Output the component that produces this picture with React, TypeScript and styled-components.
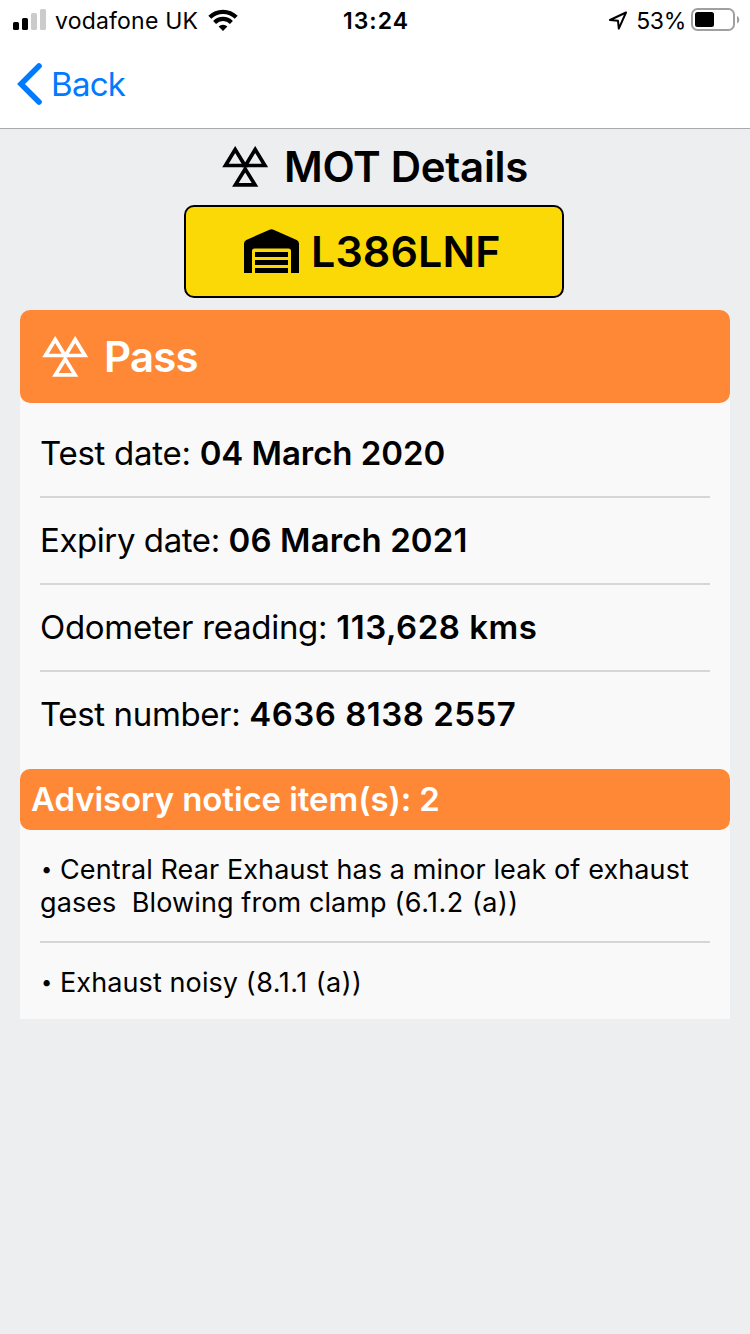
import React from "react";
import styled, { createGlobalStyle } from "styled-components";

const GlobalStyle = createGlobalStyle`
  * { box-sizing: border-box; }
  body {
    margin: 0;
    background: #edeef0;
    font-family: Inter, "Liberation Sans", sans-serif;
    color: #000;
    font-feature-settings: "calt" 0;
  }
`;

const Screen = styled.div`
  width: 750px;
  min-height: 1334px;
  display: flex;
  flex-direction: column;
`;

const StatusBar = styled.header`
  height: 40px;
  background: #fff;
  display: grid;
  grid-template-columns: 1fr auto 1fr;
  align-items: center;
  padding: 0 10px 0 13px;
`;

const StatusGroup = styled.div<{ $end?: boolean }>`
  display: flex;
  align-items: center;
  justify-content: ${(p) => (p.$end ? "flex-end" : "flex-start")};
`;

const StatusText = styled.span<{ $spacing: number; $bold?: boolean; $gap?: string }>`
  font-size: 23px;
  line-height: 38px;
  padding-top: 2px;
  font-weight: ${(p) => (p.$bold ? 600 : 400)};
  letter-spacing: ${(p) => p.$spacing}px;
  margin: ${(p) => p.$gap ?? "0"};
  white-space: nowrap;
`;

const NavBar = styled.nav`
  height: 89px;
  background: #fff;
  border-bottom: 1px solid #a9aaad;
  padding: 0 17px;
  display: flex;
  align-items: center;
`;

const BackButton = styled.button`
  border: 0;
  padding: 0;
  background: none;
  color: #007aff;
  font: inherit;
  font-size: 33px;
  line-height: 88px;
  letter-spacing: -0.7px;
  display: flex;
  align-items: center;
  gap: 9px;
`;

const HeadingText = styled.span<{ $size: number; $spacing: number; $lift?: number }>`
  font-size: ${(p) => p.$size}px;
  font-weight: 600;
  letter-spacing: ${(p) => p.$spacing}px;
  padding-bottom: ${(p) => p.$lift ?? 0}px;
`;

const Title = styled.h1`
  margin: 0;
  height: 76px;
  display: flex;
  align-items: center;
  justify-content: center;
  gap: 16px;
`;

const Plate = styled.div`
  width: 380px;
  height: 93px;
  margin-left: 184px;
  border: 2px solid #000;
  border-radius: 10px;
  background: #fbd906;
  display: flex;
  align-items: center;
  padding: 0 0 1px 58px;
  gap: 12px;
`;

const Card = styled.section`
  margin: 12px 20px 0;
  background: linear-gradient(#edeef0 50px, #f9f9f9 50px);
`;

const ResultHeader = styled.div`
  height: 93px;
  border-radius: 10px;
  background: #ff8836;
  color: #fff;
  display: flex;
  align-items: center;
  gap: 16px;
  padding-left: 22px;
`;

const SectionHeader = styled.h2`
  margin: 0;
  height: 61px;
  line-height: 60px;
  border-radius: 10px;
  background: #ff8836;
  color: #fff;
  padding-left: 11px;
  font-size: 33px;
  font-weight: 600;
  letter-spacing: -0.08px;
`;

const RowList = styled.div`
  padding: 8px 20px 10px;
`;

const Row = styled.div`
  height: 87px;
  line-height: 84px;
  font-size: 33px;
  border-bottom: 2px solid #d6d6d7;
  white-space: nowrap;
  &:last-child {
    border-bottom: 0;
  }
`;

const Label = styled.span<{ $spacing: number }>`
  letter-spacing: ${(p) => p.$spacing}px;
`;

const Value = styled.strong<{ $spacing: number }>`
  font-weight: 600;
  letter-spacing: ${(p) => p.$spacing}px;
`;

const AdvisoryList = styled.div`
  padding: 0 20px;
`;

const Advisory = styled.div`
  padding: 23px 0 22px;
  font-size: 27px;
  line-height: 33px;
  letter-spacing: 0.1px;
  border-bottom: 2px solid #d6d6d7;
  &:last-child {
    border-bottom: 0;
    padding-bottom: 20px;
  }
`;

const Line = styled.div`
  display: flex;
  height: 33px;
  white-space: pre;
`;

const Bullet = styled.span`
  width: 20px;
  padding-left: 1px;
  font-size: 20px;
`;

const Code = styled.span`
  letter-spacing: 0.5px;
`;

const SignalIcon = () => (
  <svg width="33" height="22" viewBox="0 0 33 22">
    <rect x="0" y="13" width="6" height="8" rx="1.6" />
    <rect x="9" y="9" width="6" height="12" rx="1.6" />
    <rect x="18" y="4" width="6" height="17" rx="1.6" fill="#cbcbcb" />
    <rect x="27" y="0" width="6" height="21" rx="1.6" fill="#cbcbcb" />
  </svg>
);

const WifiIcon = () => (
  <svg width="30" height="22" viewBox="0 0 30 22">
    <g fill="none" stroke="#000" strokeWidth="4.2">
      <path d="M1.800 8.200a18.800 18.800 0 0 1 26.400 0" />
      <path d="M6.600 13.400a12 12 0 0 1 16.800 0" />
    </g>
    <path d="M15 22l-4.400-4.400a6.200 6.200 0 0 1 8.800 0z" />
  </svg>
);

const LocationIcon = () => (
  <svg width="20" height="22" viewBox="0 0 20 22">
    <path
      d="M18 3.500L2 11l8 .8.800 7.800z"
      fill="none"
      stroke="#000"
      strokeWidth="2"
      strokeLinejoin="round"
    />
  </svg>
);

const BatteryIcon = () => (
  <svg width="49" height="24" viewBox="0 0 49 24">
    <rect x="1" y="1" width="42" height="21" rx="5.5" fill="none" stroke="#a0a0a0" strokeWidth="2" />
    <rect x="4" y="4" width="19" height="15" rx="2.5" />
    <path d="M46 8v7.400c1.400-.6 2.300-2 2.300-3.700s-.9-3.100-2.300-3.700z" fill="#a0a0a0" />
  </svg>
);

const ChevronIcon = () => (
  <svg width="25" height="42" viewBox="0 0 25 42">
    <path
      d="M22 3L4 21l18 18"
      fill="none"
      stroke="#007aff"
      strokeWidth="5.6"
      strokeLinecap="round"
      strokeLinejoin="miter"
    />
  </svg>
);

const TrianglesIcon = () => (
  <svg width="46" height="42" viewBox="0 0 46 42">
    <g fill="none" stroke="currentColor" strokeWidth="3.7">
      <path d="M13.200 3.500L3.500 19.500h19.400z" />
      <path d="M33.200 3.500L23.500 19.500h19.400z" />
      <path d="M23.200 23L13.400 38.900h19.600z" />
    </g>
  </svg>
);

const GarageIcon = () => (
  <svg width="55" height="44" viewBox="0 0 55 44">
    <path d="M0 44V14.500Q0 12 2.300 11L25.500.7q2-.9 4 0L52.700 11Q55 12 55 14.500V44h-8V22q0-2.500-2.500-2.500h-34Q8 19.500 8 22v22z" />
    <path d="M11 23h33v5H11zM11 31h33v5H11zM11 39h33v5H11z" />
  </svg>
);

const details = [
  { label: "Test date:", value: "04 March 2020", ls: -0.28, vs: -0.05 },
  { label: "Expiry date:", value: "06 March 2021", ls: -0.42, vs: 0.1 },
  { label: "Odometer reading:", value: "113,628 kms", ls: -0.29, vs: 0.5 },
  { label: "Test number:", value: "4636 8138 2557", ls: -0.37, vs: 0.5 },
];

const advisories = [
  {
    lines: ["Central Rear Exhaust has a minor leak of exhaust", "gases  Blowing from clamp "],
    code: "(6.1.2 (a))",
  },
  { lines: ["Exhaust noisy "], code: "(8.1.1 (a))" },
];

export default function App() {
  return (
    <Screen>
      <GlobalStyle />
      <StatusBar>
        <StatusGroup>
          <SignalIcon />
          <StatusText $spacing={0.2} $gap="0 10px 0 9px">vodafone UK</StatusText>
          <WifiIcon />
        </StatusGroup>
        <StatusText $spacing={1} $bold $gap="0 1px 0 0">13:24</StatusText>
        <StatusGroup $end>
          <LocationIcon />
          <StatusText $spacing={-0.3} $gap="0 5px 0 8px">53%</StatusText>
          <BatteryIcon />
        </StatusGroup>
      </StatusBar>
      <NavBar>
        <BackButton>
          <ChevronIcon />
          Back
        </BackButton>
      </NavBar>
      <main>
        <Title>
          <TrianglesIcon />
          <HeadingText $size={42} $spacing={-0.3} $lift={2}>MOT Details</HeadingText>
        </Title>
        <Plate>
          <GarageIcon />
          <HeadingText $size={43} $spacing={0.1}>L386LNF</HeadingText>
        </Plate>
        <Card>
          <ResultHeader>
            <TrianglesIcon />
            <HeadingText $size={42} $spacing={-0.8}>Pass</HeadingText>
          </ResultHeader>
          <RowList>
            {details.map((d) => (
              <Row key={d.label}>
                <Label $spacing={d.ls}>{d.label} </Label>
                <Value $spacing={d.vs}>{d.value}</Value>
              </Row>
            ))}
          </RowList>
          <SectionHeader>Advisory notice item(s): 2</SectionHeader>
          <AdvisoryList>
            {advisories.map((item) => (
              <Advisory key={item.code}>
                {item.lines.map((line, i) => (
                  <Line key={line}>
                    {i === 0 && <Bullet>•</Bullet>}
                    <span>{line}</span>
                    {i === item.lines.length - 1 && <Code>{item.code}</Code>}
                  </Line>
                ))}
              </Advisory>
            ))}
          </AdvisoryList>
        </Card>
      </main>
    </Screen>
  );
}
